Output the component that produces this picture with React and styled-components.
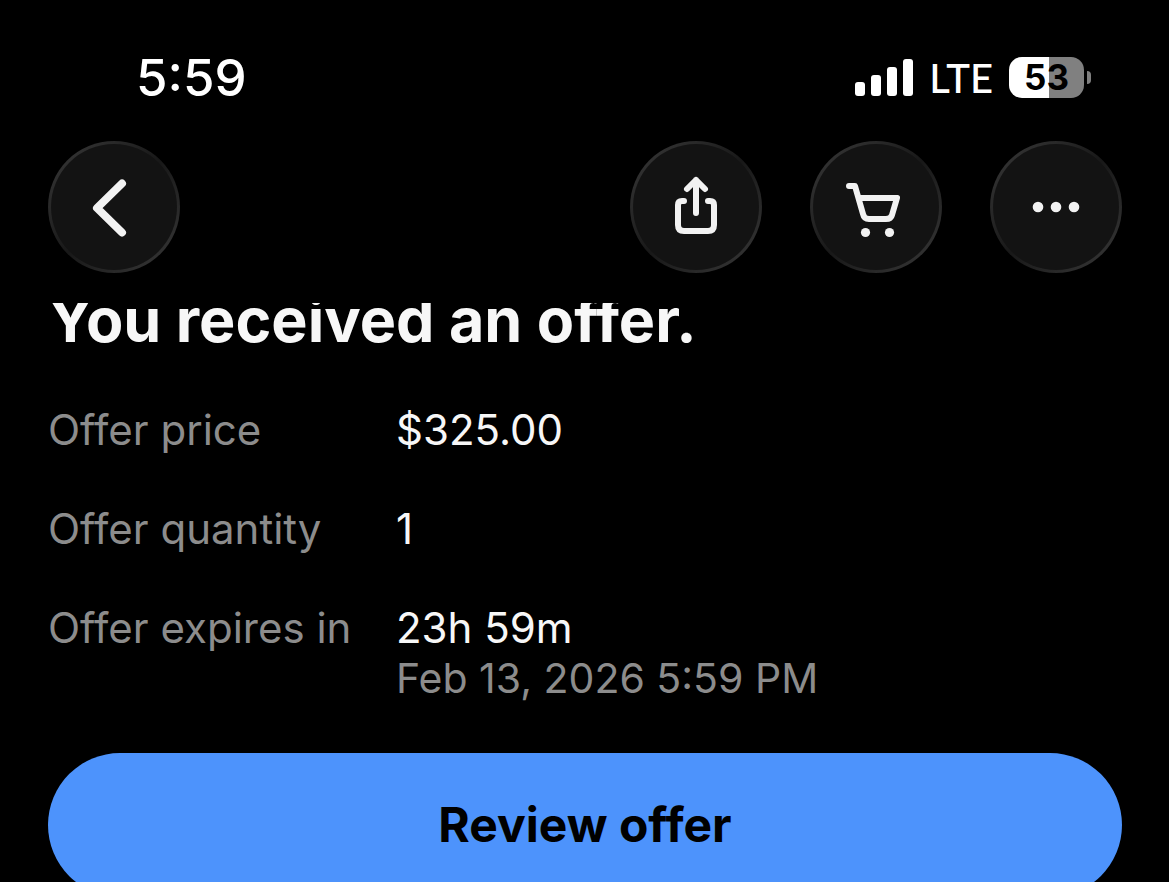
import React from 'react';
import styled, { createGlobalStyle } from 'styled-components';

const offerDetails = [
    { label: 'Offer price', value: '$325.00' },
    { label: 'Offer quantity', value: '1' },
    { label: 'Offer expires in', value: '23h 59m', note: 'Feb 13, 2026 5:59 PM' },
]

const BackIcon = () => (
    <svg width="132" height="132" viewBox="0 0 132 132" fill="none" stroke="currentColor" strokeWidth="8" strokeLinecap="round" strokeLinejoin="round" aria-hidden="true">
        <path d="M74 42.5L49 67L74 91.5" />
    </svg>
)

const ShareIcon = () => (
    <svg width="132" height="132" viewBox="0 0 132 132" fill="none" stroke="currentColor" strokeWidth="6" strokeLinecap="round" strokeLinejoin="round" aria-hidden="true">
        <path d="M66 72V39M57 48L66 39L75 48" />
        <path d="M54 60H52Q48 60 48 64V84Q48 90 54 90H78Q84 90 84 84V64Q84 60 80 60H78" />
    </svg>
)

const CartIcon = () => (
    <svg width="132" height="132" viewBox="0 0 132 132" fill="none" stroke="currentColor" strokeWidth="6" strokeLinecap="round" strokeLinejoin="round" aria-hidden="true">
        <path d="M39 45H45L53 73Q54 78 59 78H76Q81 78 82 74L87 57H49" />
        <circle cx="55.5" cy="91.5" r="4.6" fill="currentColor" stroke="none" />
        <circle cx="79.5" cy="91.5" r="4.6" fill="currentColor" stroke="none" />
    </svg>
)

const MoreIcon = () => (
    <svg width="132" height="132" viewBox="0 0 132 132" fill="currentColor" aria-hidden="true">
        <circle cx="48" cy="66" r="5.3" />
        <circle cx="66" cy="66" r="5.3" />
        <circle cx="84" cy="66" r="5.3" />
    </svg>
)

const SignalIcon = () => (
    <svg width="58" height="37" viewBox="0 0 58 37" fill="#fff" role="img" aria-label="Signal strength">
        <rect x="0" y="23" width="10" height="14" rx="3" />
        <rect x="16" y="16" width="10" height="21" rx="3" />
        <rect x="32" y="8" width="10" height="29" rx="3" />
        <rect x="48" y="0" width="10" height="37" rx="3" />
    </svg>
)

const App = () => {
    return (
        <>
            <GlobalStyle />
            <Screen>
                <StatusBar>
                    <Time>5:59</Time>
                    <StatusIcons>
                        <SignalIcon />
                        <Network>LTE</Network>
                        <Battery>
                            <BatteryLevel>53</BatteryLevel>
                            <BatteryCap />
                        </Battery>
                    </StatusIcons>
                </StatusBar>
                <NavBar>
                    <RoundButton type="button" aria-label="Back"><BackIcon /></RoundButton>
                    <NavActions>
                        <RoundButton type="button" aria-label="Share"><ShareIcon /></RoundButton>
                        <RoundButton type="button" aria-label="Cart"><CartIcon /></RoundButton>
                        <RoundButton type="button" aria-label="More options"><MoreIcon /></RoundButton>
                    </NavActions>
                </NavBar>
                {/* content is scrolled a little under the nav bar */}
                <Content>
                    <Title>You received an offer.</Title>
                    <Details>
                        {offerDetails.map((item) => (
                            <DetailRow key={item.label}>
                                <Label>{item.label}</Label>
                                <Value>
                                    {item.value}
                                    {item.note && <Note>{item.note}</Note>}
                                </Value>
                            </DetailRow>
                        ))}
                    </Details>
                    <ReviewButton type="button">Review offer</ReviewButton>
                </Content>
            </Screen>
        </>
    );
}

export default App;

const GlobalStyle = createGlobalStyle`
    * {
        box-sizing: border-box;
    }
    body {
        margin: 0;
        background: #000;
        color: #fff;
        font-family: Inter, "Liberation Sans", sans-serif;
    }
`;

const Screen = styled.div`
    display: flex;
    flex-direction: column;
    height: 100vh;
    overflow: hidden;
    padding: 0 47px 0 48px;
`;

const StatusBar = styled.header`
    display: flex;
    flex-shrink: 0;
    justify-content: space-between;
    align-items: center;
    padding: 46px 31px 33px 88px;
`;

const Time = styled.span`
    padding-top: 2px;
    font-size: 51px;
    line-height: 60px;
    font-weight: 500;
`;

const StatusIcons = styled.div`
    display: flex;
    align-items: center;
    gap: 16px;
`;

const Network = styled.span`
    padding-top: 2px;
    font-family: Lato, "Liberation Sans", sans-serif;
    font-size: 40px;
    line-height: 48px;
    font-weight: 500;
`;

const Battery = styled.div`
    display: flex;
    align-items: center;
    gap: 3px;
`;

const BatteryLevel = styled.span`
    width: 75px;
    border-radius: 13px;
    background: linear-gradient(to right, #fff 53%, #808080 53%);
    color: #000;
    font-size: 35px;
    line-height: 41px;
    font-weight: 700;
    text-align: center;
`;

const BatteryCap = styled.span`
    width: 4px;
    height: 13px;
    border-radius: 0 4px 4px 0;
    background: #808080;
`;

const NavBar = styled.nav`
    display: flex;
    flex-shrink: 0;
    justify-content: space-between;
`;

const NavActions = styled.div`
    display: flex;
    gap: 48px;
`;

const RoundButton = styled.button`
    display: flex;
    width: 132px;
    height: 132px;
    padding: 0;
    border: 3px solid transparent;
    border-radius: 50%;
    background:
        linear-gradient(#131313, #131313) padding-box,
        linear-gradient(135deg, #303030 15%, #181818 50%, #303030 85%) border-box;
    color: #f2f2f2;
    cursor: pointer;

    svg {
        flex-shrink: 0;
        margin: -3px;
    }
`;

const Content = styled.main`
    display: flex;
    flex-direction: column;
    flex: 1;
    min-height: 0;
    margin-top: 30px;
    overflow: hidden;
`;

const Title = styled.h1`
    flex-shrink: 0;
    margin: -19px 0 48px;
    color: #f7f7f7;
    font-size: 61px;
    line-height: 72px;
    font-weight: 700;
`;

const Details = styled.dl`
    display: flex;
    flex-shrink: 0;
    flex-direction: column;
    gap: 48px;
    margin: 0 0 49px;
    font-size: 42px;
    line-height: 51px;
`;

const DetailRow = styled.div`
    display: grid;
    grid-template-columns: 348px 1fr;
`;

const Label = styled.dt`
    color: #8c8c8c;
`;

const Value = styled.dd`
    margin: 0;
    color: #f7f7f7;
`;

const Note = styled.div`
    color: #8c8c8c;
    font-size: 41px;
`;

const ReviewButton = styled.button`
    flex-shrink: 0;
    height: 144px;
    padding: 0 0 2px;
    border: 0;
    border-radius: 72px;
    background: #4d93fc;
    color: #000;
    font-family: inherit;
    font-size: 48px;
    font-weight: 700;
    cursor: pointer;
`;
